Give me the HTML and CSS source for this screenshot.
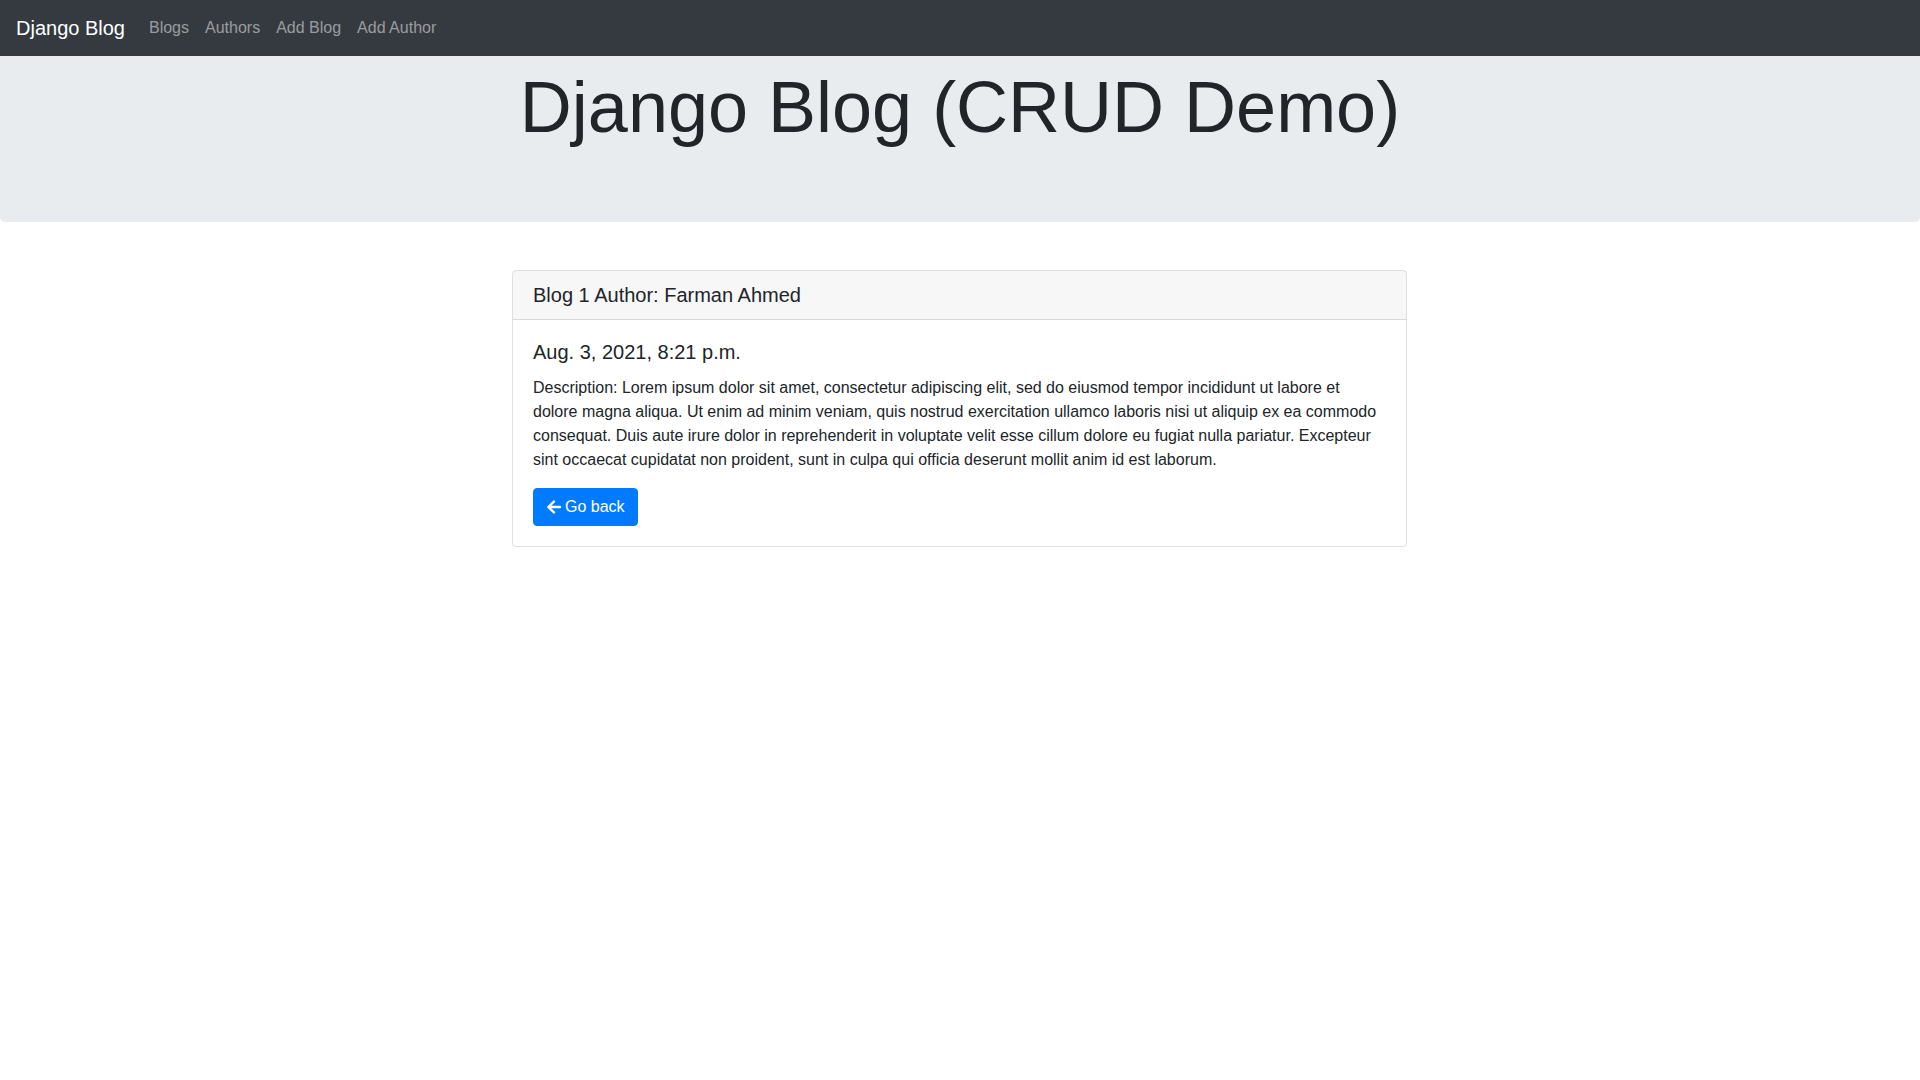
FILE: index.html
```html
<!DOCTYPE html>
<html lang="en">
<head>
<meta charset="utf-8">
<title>Django Blog</title>
<link rel="stylesheet" href="styles.css">
</head>
<body>
<nav class="navbar">
  <a class="brand" href="#">Django Blog</a>
  <ul class="nav">
    <li><a class="nav-link" href="#">Blogs</a></li>
    <li><a class="nav-link" href="#">Authors</a></li>
    <li><a class="nav-link" href="#">Add Blog</a></li>
    <li><a class="nav-link" href="#">Add Author</a></li>
  </ul>
</nav>
<header class="jumbotron">
  <h1 class="title">Django Blog (CRUD Demo)</h1>
</header>
<main class="main">
  <div class="card">
    <div class="card-header">Blog 1 Author: Farman Ahmed</div>
    <div class="card-body">
      <h5 class="card-title">Aug. 3, 2021, 8:21 p.m.</h5>
      <p class="card-text">Description: Lorem ipsum dolor sit amet, consectetur adipiscing elit, sed do eiusmod tempor incididunt ut labore et dolore magna aliqua. Ut enim ad minim veniam, quis nostrud exercitation ullamco laboris nisi ut aliquip ex ea commodo consequat. Duis aute irure dolor in reprehenderit in voluptate velit esse cillum dolore eu fugiat nulla pariatur. Excepteur sint occaecat cupidatat non proident, sunt in culpa qui officia deserunt mollit anim id est laborum.</p>
      <a class="btn" href="#"><svg class="icon" viewBox="0 0 448 512" aria-hidden="true"><path fill="currentColor" d="M257.5 445.1l-22.2 22.2c-9.4 9.4-24.6 9.4-33.9 0L7 273c-9.4-9.4-9.4-24.6 0-33.9L201.4 44.7c9.4-9.4 24.6-9.4 33.9 0l22.2 22.2c9.5 9.5 9.3 25-.4 34.3L136.6 216H424c13.3 0 24 10.7 24 24v32c0 13.3-10.7 24-24 24H136.6l120.5 114.8c9.8 9.3 10 24.8.4 34.3z"/></svg>Go back</a>
    </div>
  </div>
</main>
</body>
</html>
```
FILE: styles.css
```css
* { box-sizing: border-box; }
html, body { margin: 0; padding: 0; }
body {
  font-family: "Liberation Sans", Arial, sans-serif;
  font-size: 16px;
  line-height: 1.5;
  color: #212529;
  background: #fff;
}
a { text-decoration: none; }

.navbar {
  display: flex;
  align-items: center;
  background: #343a40;
  padding: 8px 16px;
  height: 56px;
}
.brand {
  color: #fff;
  font-size: 20px;
  line-height: 30px;
  padding: 5px 0;
  margin-right: 16px;
}
.nav {
  display: flex;
  list-style: none;
  margin: 0;
  padding: 0;
}
.nav-link {
  display: block;
  color: rgba(255, 255, 255, 0.5);
  padding: 8px;
}

.jumbotron {
  background: #e9ecef;
  border-radius: 0 0 4.8px 4.8px;
  padding: 8px 32px 64px;
  height: 166px;
  text-align: center;
}
.title {
  margin: 0 0 8px;
  font-size: 72px;
  font-weight: 300;
  line-height: 1.2;
}

.main {
  display: flex;
  justify-content: center;
  margin-top: 48px;
  padding-right: 1px;
}
.card {
  width: 895px;
  border: 1px solid rgba(0, 0, 0, 0.125);
  border-radius: 4px;
  overflow: hidden;
}
.card-header {
  background: rgba(0, 0, 0, 0.03);
  border-bottom: 1px solid rgba(0, 0, 0, 0.125);
  padding: 12px 20px;
  font-size: 20px;
  line-height: 24px;
}
.card-body {
  padding: 20px;
}
.card-title {
  margin: 0 0 12px;
  font-size: 20px;
  font-weight: 500;
  line-height: 1.2;
}
.card-text {
  margin: 0 0 16px;
}
.btn {
  display: inline-flex;
  align-items: center;
  gap: 4.5px;
  background: #007bff;
  border: 1px solid #007bff;
  color: #fff;
  padding: 6px 12px;
  line-height: 24px;
  font-size: 16px;
  border-radius: 4px;
}
.icon {
  width: 14px;
  height: 16px;
  margin-left: 0.5px;
}
```
